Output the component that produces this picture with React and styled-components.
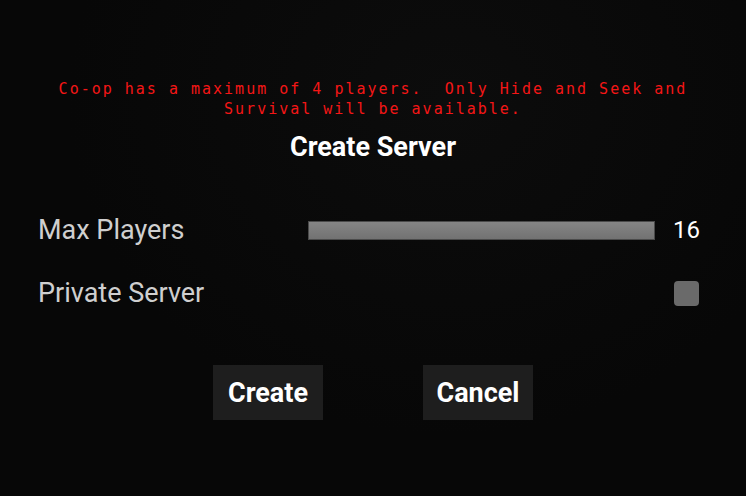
import styled, { createGlobalStyle } from "styled-components";

const GlobalStyle = createGlobalStyle`
    html, body {
        margin: 0;
        padding: 0;
        background: #070707;
    }
`;

export default function App() {
    const maxPlayers = 16;

    return (
        <>
            <GlobalStyle />
            <Screen>
                <Warning>
                    Co-op has a maximum of 4 players.&nbsp; Only Hide and Seek and
                    <br />
                    Survival will be available.
                </Warning>
                <Title>Create Server</Title>
                <Options>
                    <OptionRow>
                        <Label>Max Players</Label>
                        <SliderWrap>
                            <SliderTrack />
                            <Value>{maxPlayers}</Value>
                        </SliderWrap>
                    </OptionRow>
                    <OptionRow>
                        <Label>Private Server</Label>
                        <Checkbox />
                    </OptionRow>
                </Options>
                <Buttons>
                    <Button>Create</Button>
                    <Button>Cancel</Button>
                </Buttons>
            </Screen>
        </>
    );
}

const Screen = styled.div`
    width: 746px;
    height: 496px;
    box-sizing: border-box;
    padding-top: 79px;
    display: flex;
    flex-direction: column;
    align-items: center;
    background: radial-gradient(ellipse at 60% 20%, #0c0c0c 0%, #070707 60%);
    font-family: Roboto, "Noto Sans", sans-serif;
`;

const Warning = styled.div`
    font-family: "DejaVu Sans Mono", "Liberation Mono", monospace;
    font-size: 15px;
    letter-spacing: 2px;
    line-height: 20px;
    color: #f41616;
    text-align: center;
    white-space: nowrap;
`;

const Title = styled.h1`
    margin: 12px 0 0;
    font-size: 27px;
    font-weight: 700;
    color: #ffffff;
`;

const Options = styled.div`
    width: 662px;
    margin: 49px 8px 0 0;
    display: flex;
    flex-direction: column;
    gap: 27px;
`;

const OptionRow = styled.div`
    height: 36px;
    display: flex;
    align-items: center;
    justify-content: space-between;
`;

const Label = styled.span`
    font-size: 27px;
    color: #cfcfcf;
`;

const SliderWrap = styled.div`
    display: flex;
    align-items: center;
    gap: 18px;
`;

const SliderTrack = styled.div`
    width: 345px;
    height: 17px;
    background: linear-gradient(to bottom, #858585, #727272);
    border: 1px solid #4a4a4a;
`;

const Value = styled.span`
    font-size: 24px;
    color: #ffffff;
`;

const Checkbox = styled.div`
    width: 25px;
    height: 25px;
    margin-right: 1px;
    border-radius: 4px;
    background: #6a6a6a;
`;

const Buttons = styled.div`
    margin-top: 54px;
    display: flex;
    gap: 100px;
`;

const Button = styled.button`
    width: 110px;
    height: 55px;
    border: none;
    background: #1e1e1e;
    color: #ffffff;
    font-family: Roboto, "Noto Sans", sans-serif;
    font-size: 27px;
    font-weight: 700;
    cursor: pointer;
`;
